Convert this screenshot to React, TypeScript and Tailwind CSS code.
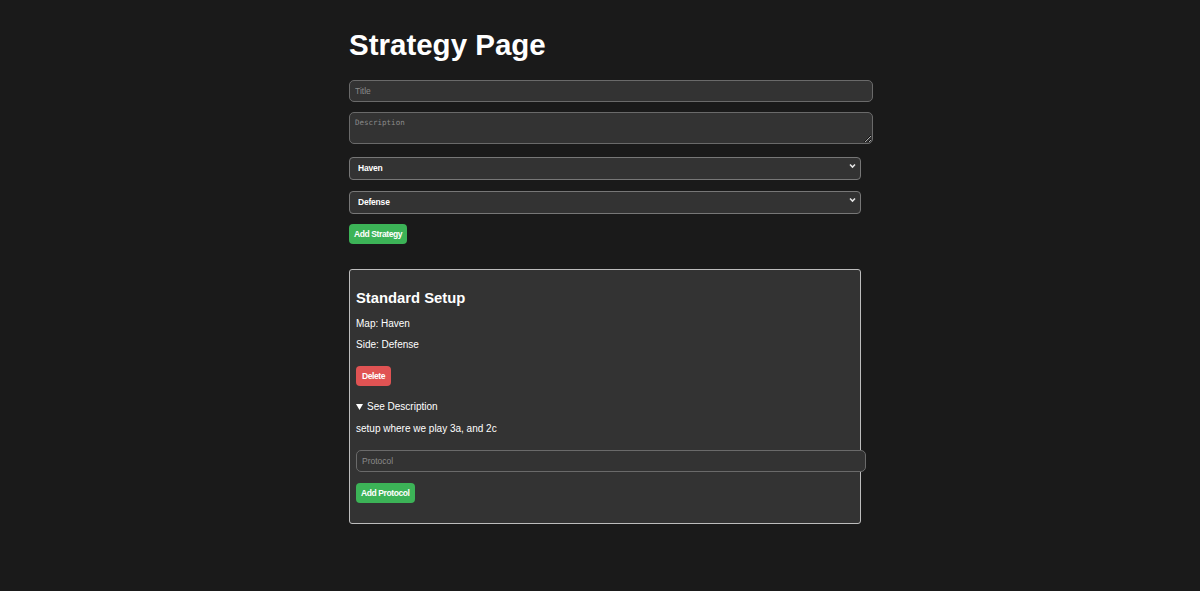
import React from "react";

const Chevron = () => (
  <svg
    className="pointer-events-none absolute right-[5px] top-1/2 -translate-y-1/2"
    width="7"
    height="5"
    viewBox="0 0 7 5"
  >
    <path d="M1 1 L3.5 3.6 L6 1" stroke="#e5e5e5" strokeWidth="1.5" fill="none" />
  </svg>
);

export default function App() {
  return (
    <div
      className="min-h-[591px] w-full bg-[#1a1a1a] text-white"
      style={{ fontFamily: '"Liberation Sans", Arial, sans-serif' }}
    >
      <div className="flex justify-center pl-[10px]">
        <div className="w-[512px] pt-[26px]">
          <h1 className="m-0 text-[29.5px] font-bold leading-[37px]">Strategy Page</h1>

          <div className="mt-[17px] flex flex-col">
            <input
              placeholder="Title"
              className="h-[22px] w-[524px] rounded-[5px] border border-[#6a6a6a] bg-[#333] px-[5px] text-[8.5px] text-white outline-none placeholder:text-[#8a8a8a]"
            />
            <textarea
              placeholder="Description"
              className="mt-[10px] h-[32px] w-[524px] resize rounded-[5px] border border-[#6a6a6a] bg-[#333] px-[5px] py-[5px] text-[7.5px] leading-[10px] text-white outline-none placeholder:text-[#8a8a8a]"
              style={{ fontFamily: '"DejaVu Sans Mono", monospace' }}
            />
            <div className="relative mt-[10px] h-[23px] w-[512px]">
              <select className="h-full w-full appearance-none rounded-[4px] border border-[#777] bg-[#333] pl-[8px] text-[8.5px] font-bold tracking-[-0.2px] text-white outline-none">
                <option>Haven</option>
              </select>
              <Chevron />
            </div>
            <div className="relative mt-[11px] h-[23px] w-[512px]">
              <select className="h-full w-full appearance-none rounded-[4px] border border-[#777] bg-[#333] pl-[8px] text-[8.5px] font-bold tracking-[-0.2px] text-white outline-none">
                <option>Defense</option>
              </select>
              <Chevron />
            </div>
            <div className="mt-[9px]">
              <button className="h-[20px] rounded-[4px] bg-[#3cb357] px-[5px] text-[8.5px] font-bold tracking-[-0.4px] text-white">
                Add Strategy
              </button>
            </div>
          </div>

          <div className="mt-[25px] h-[255px] w-[512px] rounded-[3px] border border-[#bdbdbd] bg-[#333] px-[6px]">
            <h3 className="mt-[19px] text-[14.8px] font-bold leading-[18px]">Standard Setup</h3>
            <p className="mt-[11px] text-[10px] leading-[12px]">Map: Haven</p>
            <p className="mt-[9px] text-[10px] leading-[12px]">Side: Defense</p>
            <button className="mt-[15px] h-[20px] rounded-[4px] bg-[#e05353] px-[6px] text-[8.5px] font-bold tracking-[-0.4px] text-white">
              Delete
            </button>
            <div className="mt-[15px] flex items-center text-[10px] leading-[12px]">
              <svg className="mr-[4px]" width="7" height="6" viewBox="0 0 7 6">
                <path d="M0 0 H7 L3.5 6 Z" fill="#ffffff" />
              </svg>
              <span>See Description</span>
            </div>
            <p className="mt-[10px] text-[10px] leading-[12px]">setup where we play 3a, and 2c</p>
            <input
              placeholder="Protocol"
              className="mt-[15px] block h-[22px] w-[510px] rounded-[5px] border border-[#6a6a6a] bg-[#333] px-[5px] text-[8.5px] text-white outline-none placeholder:text-[#8a8a8a]"
            />
            <button className="mt-[11px] h-[20px] rounded-[4px] bg-[#3cb357] px-[5px] text-[8.5px] font-bold tracking-[-0.4px] text-white">
              Add Protocol
            </button>
          </div>
        </div>
      </div>
    </div>
  );
}
